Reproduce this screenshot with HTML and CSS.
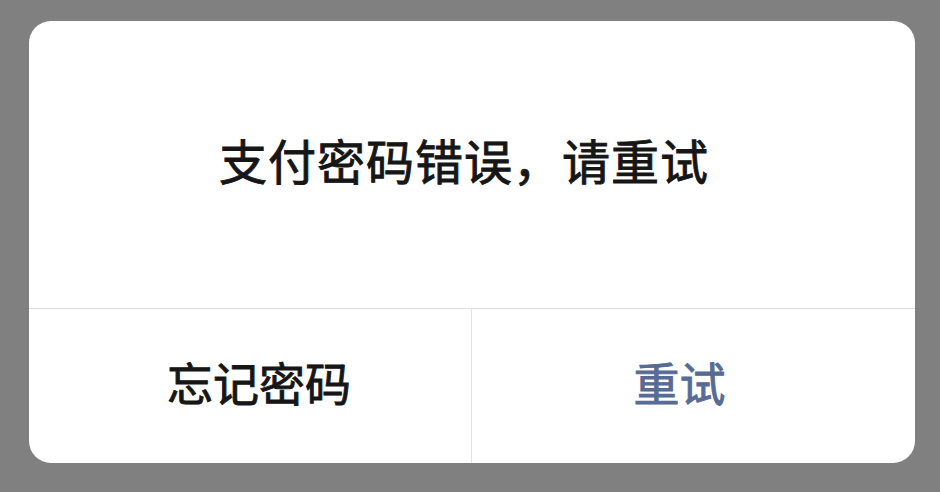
FILE: index.html
```html
<!DOCTYPE html>
<html lang="zh-CN">
<head>
    <meta charset="UTF-8">
    <meta name="viewport" content="width=device-width, initial-scale=1.0">
    <title>支付密码错误</title>
    <link rel="stylesheet" href="styles.css">
</head>
<body>
    <div class="dialog">
        <div class="dialog-body">
            <p class="dialog-message">支付密码错误，请重试</p>
        </div>
        <div class="dialog-actions">
            <button class="dialog-button forget-button">忘记密码</button>
            <button class="dialog-button retry-button">重试</button>
        </div>
    </div>
</body>
</html>
```

FILE: styles.css
```css
* {
    margin: 0;
    padding: 0;
    box-sizing: border-box;
}

body {
    width: 940px;
    height: 492px;
    padding: 21px 25px 29px 29px;
    background: #808080;
    font-family: "Noto Sans CJK SC", "Noto Sans", sans-serif;
    overflow: hidden;
}

.dialog {
    display: flex;
    flex-direction: column;
    width: 886px;
    height: 442px;
    background: #fff;
    border-radius: 22px;
    overflow: hidden;
}

.dialog-body {
    display: flex;
    justify-content: center;
    align-items: center;
    height: 288px;
    padding-bottom: 12px;
    border-bottom: 1px solid #e2e2e2;
}

.dialog-message {
    font-size: 48px;
    font-weight: 400;
    -webkit-text-stroke: 0.9px currentColor;
    letter-spacing: 1px;
    color: #161616;
    padding-right: 16px;
}

.dialog-actions {
    display: grid;
    grid-template-columns: 1fr 1fr;
    flex: 1;
}

.dialog-button {
    display: flex;
    justify-content: center;
    align-items: center;
    padding-bottom: 10px;
    background: none;
    border: none;
    font-family: inherit;
    font-size: 46px;
    font-weight: 400;
    -webkit-text-stroke: 0.9px currentColor;
    cursor: pointer;
}

.forget-button {
    color: #161616;
    border-right: 1px solid #e2e2e2;
    padding-left: 18px;
}

.retry-button {
    color: #576b95;
    padding-right: 28px;
}
```
